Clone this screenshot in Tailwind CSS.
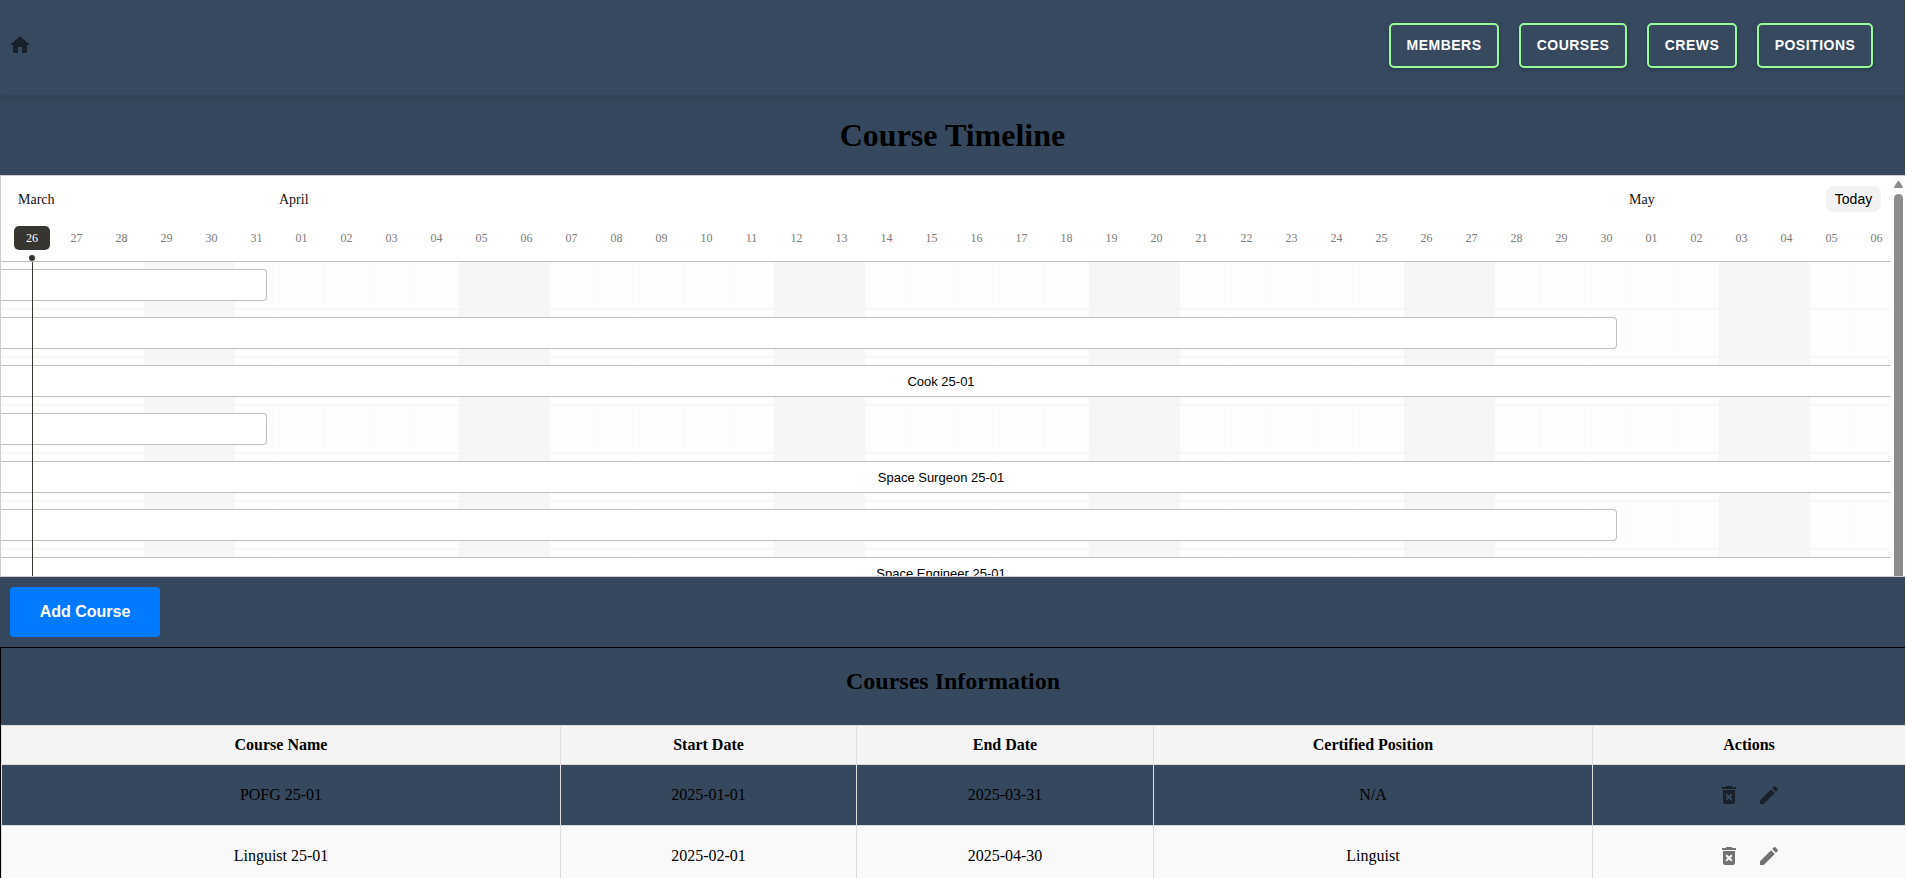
<!DOCTYPE html>
<html lang="en">
<head>
<meta charset="utf-8">
<title>Course Timeline</title>
<script src="https://cdn.jsdelivr.net/npm/@tailwindcss/browser@4"></script>
</head>
<body class="bg-white h-[878px] overflow-hidden font-['Liberation_Serif',serif] text-black">
<div class="w-[1905px] h-[878px] overflow-hidden bg-[#36485d] flex flex-col">
  <nav class="h-[95px] shrink-0 bg-[#36495e] shadow-[0_4px_8px_rgba(0,0,0,0.08)] flex items-center justify-between pl-2 pr-[32px] pb-[5px]">
    <svg class="size-6" viewBox="0 0 24 24" fill="rgba(0,0,0,0.54)"><path d="M10 20v-6h4v6h5v-8h3L12 3 2 12h3v8z"/></svg>
    <div class="flex gap-5 font-['Liberation_Sans',sans-serif] font-bold text-sm tracking-[0.5px] text-white">
      <a class="w-[110px] h-[45px] border-2 border-[#98fb98] rounded-[5px] flex items-center justify-center shadow-[0_2px_4px_rgba(0,0,0,0.2)]">MEMBERS</a>
      <a class="w-[108px] h-[45px] border-2 border-[#98fb98] rounded-[5px] flex items-center justify-center shadow-[0_2px_4px_rgba(0,0,0,0.2)]">COURSES</a>
      <a class="w-[90px] h-[45px] border-2 border-[#98fb98] rounded-[5px] flex items-center justify-center shadow-[0_2px_4px_rgba(0,0,0,0.2)]">CREWS</a>
      <a class="w-[116px] h-[45px] border-2 border-[#98fb98] rounded-[5px] flex items-center justify-center shadow-[0_2px_4px_rgba(0,0,0,0.2)]">POSITIONS</a>
    </div>
  </nav>
  <h1 class="h-20 shrink-0 flex items-center justify-center text-[32px] font-bold leading-none">Course Timeline</h1>

  <section class="h-[402px] shrink-0 border border-r-0 border-[#ccc] bg-white flex overflow-hidden">
    <div class="w-[1890px] shrink-0 relative overflow-hidden">
      <div class="h-[86px] border-b border-[#bfbfbf]">
        <div class="h-[46px] flex items-center text-sm">
          <div class="w-[261px] pl-[17px] pt-[2px] text-[#111]">March</div>
          <div class="w-[1350px] pl-[17px] pt-[2px] text-[#111]">April</div>
          <div class="pl-[17px] pt-[2px] flex-1 text-[#111]">May</div>
          <div class="w-[55px] h-[26px] mr-[10px] rounded-lg bg-[#f2f2f2] flex items-center justify-center font-['Liberation_Sans',sans-serif]">Today</div>
        </div>
        <div id="days" class="pl-[8px] pt-1 flex text-xs text-[#7b7b79]"></div>
      </div>
      <div id="grid" class="relative h-[400px] bg-[#fdfdfd]">
        <div id="cols" class="flex h-full -ml-[37px]"></div>
        <div id="bars" class="absolute inset-0 flex flex-col"></div>
      </div>
      <div class="absolute left-[31px] top-[86px] w-px h-[330px] bg-[#37352f]"></div>
      <div class="absolute left-[28px] top-[79px] size-[6px] rounded-full bg-[#37352f]"></div>
    </div>
    <div class="flex-1 bg-[#fcfcfc] pl-[3px]">
      <svg class="w-[9px] h-[7px] mt-[5px]" viewBox="0 0 9 7" fill="#8b8b8b"><path d="M3.6.6a1.1 1.1 0 0 1 1.8 0L8.8 5.8Q9.2 7 8 7H1Q-.2 7 .2 5.8z"/></svg>
      <div class="w-[9px] h-[500px] mt-[6px] rounded-full bg-[#8b8b8b]"></div>
    </div>
  </section>

  <div class="h-[70px] shrink-0 p-[10px]">
    <button class="w-[150px] h-[50px] rounded bg-[#007bff] text-white font-bold text-base font-['Liberation_Sans',sans-serif]">Add Course</button>
  </div>

  <section class="shrink-0 border-t border-l border-black">
    <h2 class="h-[77px] pb-[12px] flex items-center justify-center text-2xl font-bold">Courses Information</h2>
    <table class="w-[1904px] table-fixed border-separate border-spacing-0 border-l border-t border-[#ddd] text-center text-base">
      <colgroup><col class="w-[559px]"><col class="w-[296px]"><col class="w-[297px]"><col class="w-[439px]"><col></colgroup>
      <thead>
        <tr class="h-[39px] bg-[#f4f4f4] leading-none">
          <th class="border-r border-b border-[#ddd]">Course Name</th><th class="border-r border-b border-[#ddd]">Start Date</th><th class="border-r border-b border-[#ddd]">End Date</th><th class="border-r border-b border-[#ddd]">Certified Position</th><th class="border-b border-[#ddd]">Actions</th>
        </tr>
      </thead>
      <tbody>
        <tr class="h-[61px]">
          <td class="border-r border-b border-[#ddd]">POFG 25-01</td><td class="border-r border-b border-[#ddd]">2025-01-01</td><td class="border-r border-b border-[#ddd]">2025-03-31</td><td class="border-r border-b border-[#ddd]">N/A</td>
          <td class="border-b border-[#ddd]"><div class="flex justify-center gap-4">
            <svg class="size-6" viewBox="0 0 24 24" fill="rgba(0,0,0,0.54)"><path d="M6 19c0 1.1.9 2 2 2h8c1.1 0 2-.9 2-2V7H6v12zm2.46-7.12l1.41-1.41L12 12.59l2.12-2.12 1.41 1.41L13.41 14l2.12 2.12-1.41 1.41L12 15.41l-2.12 2.12-1.41-1.41L10.59 14l-2.13-2.12zM15.5 4l-1-1h-5l-1 1H5v2h14V4z"/></svg>
            <svg class="size-6" viewBox="0 0 24 24" fill="rgba(0,0,0,0.54)"><path d="M3 17.25V21h3.75L17.81 9.94l-3.75-3.75L3 17.25zM20.71 7.04c.39-.39.39-1.02 0-1.41l-2.34-2.34a.9959.9959 0 0 0-1.41 0l-1.83 1.83 3.75 3.75 1.83-1.83z"/></svg>
          </div></td>
        </tr>
        <tr class="h-[61px] bg-[#f9f9f9]">
          <td class="border-r border-b border-[#ddd]">Linguist 25-01</td><td class="border-r border-b border-[#ddd]">2025-02-01</td><td class="border-r border-b border-[#ddd]">2025-04-30</td><td class="border-r border-b border-[#ddd]">Linguist</td>
          <td class="border-b border-[#ddd]"><div class="flex justify-center gap-4">
            <svg class="size-6" viewBox="0 0 24 24" fill="rgba(0,0,0,0.54)"><path d="M6 19c0 1.1.9 2 2 2h8c1.1 0 2-.9 2-2V7H6v12zm2.46-7.12l1.41-1.41L12 12.59l2.12-2.12 1.41 1.41L13.41 14l2.12 2.12-1.41 1.41L12 15.41l-2.12 2.12-1.41-1.41L10.59 14l-2.13-2.12zM15.5 4l-1-1h-5l-1 1H5v2h14V4z"/></svg>
            <svg class="size-6" viewBox="0 0 24 24" fill="rgba(0,0,0,0.54)"><path d="M3 17.25V21h3.75L17.81 9.94l-3.75-3.75L3 17.25zM20.71 7.04c.39-.39.39-1.02 0-1.41l-2.34-2.34a.9959.9959 0 0 0-1.41 0l-1.83 1.83 3.75 3.75 1.83-1.83z"/></svg>
          </div></td>
        </tr>
      </tbody>
    </table>
  </section>
</div>
<script>
  // Day labels: 26 March to 6 May
  let days = '', cols = '';
  const start = Date.UTC(2025, 2, 26);
  for (let i = 0; i < 42; i++) {
    const n = String(new Date(start + i * 864e5).getUTCDate()).padStart(2, '0');
    days += i === 0
      ? `<div class="w-[45px] shrink-0"><div class="w-9 h-6 ml-[5px] rounded-[5px] bg-[#37352f] text-white flex items-center justify-center">${n}</div></div>`
      : `<div class="w-[45px] h-6 shrink-0 flex items-center justify-center">${n}</div>`;
  }
  // Day columns; the shaded pair repeats every seven days, its edge line included
  for (let i = -1; i < 42; i++) {
    const d = (i + 7) % 7;
    cols += d === 3 || d === 4
      ? '<div class="w-[45px] h-full shrink-0 bg-[#f6f6f6] border-l border-[#f5f5f5]"></div>'
      : d === 5
      ? '<div class="w-[45px] h-full shrink-0 border-l border-[#f6f6f6]"></div>'
      : '<div class="w-[45px] h-full shrink-0 border-l border-[#f9f9f9]"></div>';
  }
  // Bars: [name, right edge or 0 for a bar that runs past the view]
  const rows = [['', 267], ['', 1617], ['Cook 25-01', 0], ['', 267], ['Space Surgeon 25-01', 0], ['', 1617], ['Space Engineer 25-01', 0]];
  document.getElementById('days').innerHTML = days;
  document.getElementById('cols').innerHTML = cols;
  document.getElementById('bars').innerHTML = rows.map(([t, w]) =>
    `<div class="h-12 shrink-0 pt-[7px] border-b-2 border-[#f5f5f5]/80">` + (w
      ? `<div class="h-8 bg-white border border-l-0 border-[#bfbfbf] rounded-r" style="width:${w - 1}px"></div>`
      : `<div class="h-8 bg-white border-y border-[#bfbfbf] flex items-center justify-center pr-[10px] pt-[2px] font-['Liberation_Sans',sans-serif] text-[13px]">${t}</div>`) + '</div>').join('');
</script>
</body>
</html>
